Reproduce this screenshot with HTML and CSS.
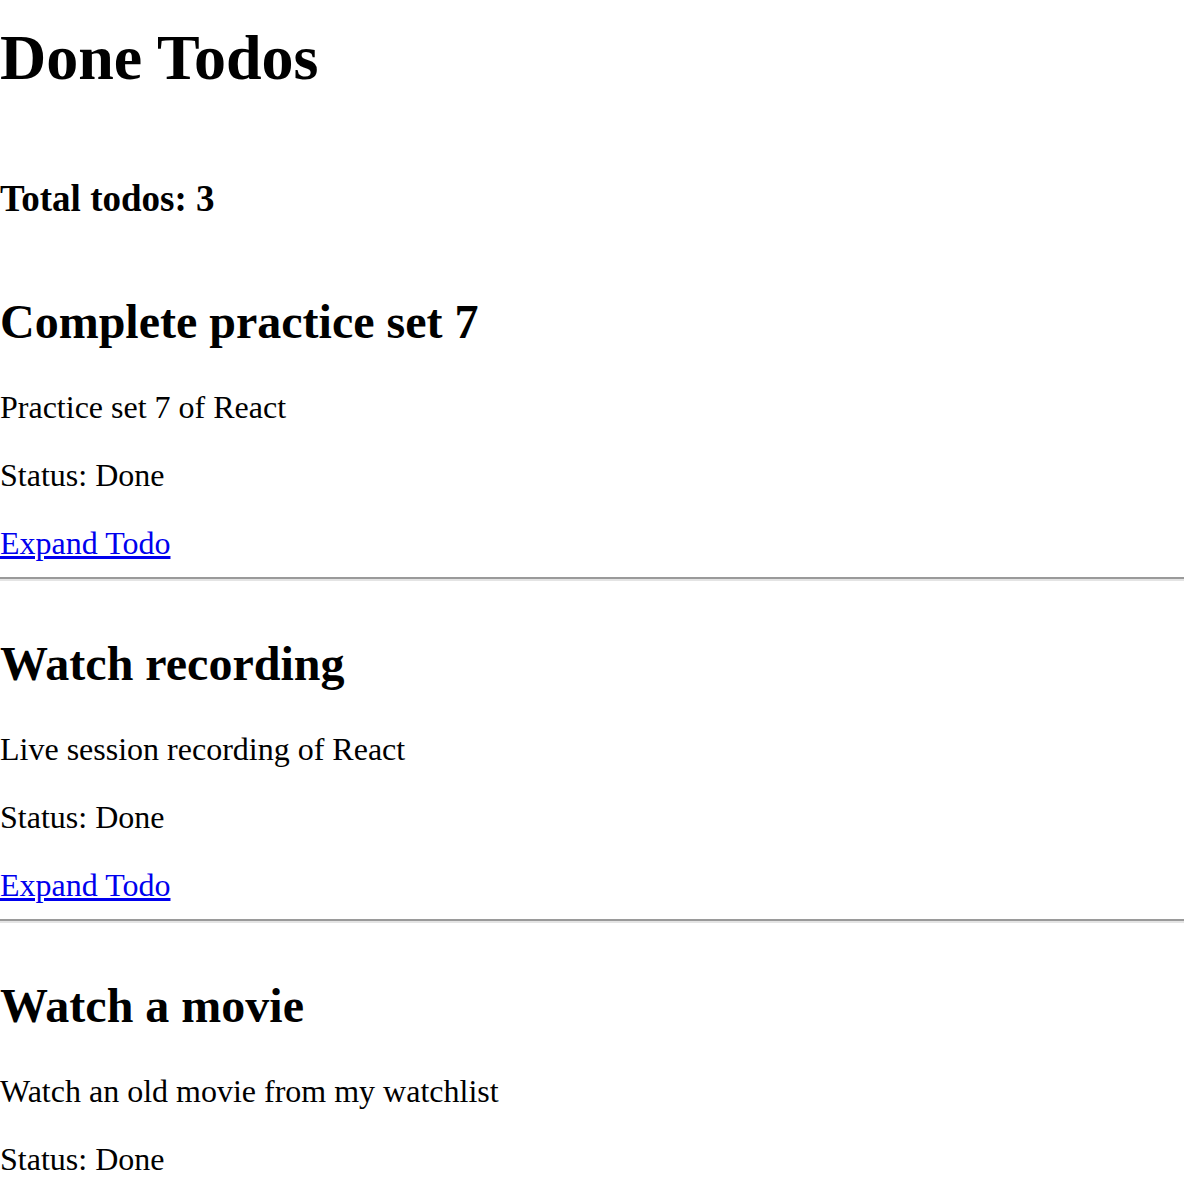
FILE: index.html
```html
<!DOCTYPE html>
<html lang="en">
<head>
<meta charset="utf-8">
<title>Done Todos</title>
<link rel="stylesheet" href="styles.css">
</head>
<body>
<h1 class="page-title">Done Todos</h1>
<h3 class="total">Total todos: 3</h3>
<div class="todo-list">
  <div class="todo">
    <h2 class="todo-title">Complete practice set 7</h2>
    <p class="todo-text">Practice set 7 of React</p>
    <p class="todo-text">Status: Done</p>
    <a class="todo-link" href="#">Expand Todo</a>
    <hr class="todo-rule">
  </div>
  <div class="todo">
    <h2 class="todo-title">Watch recording</h2>
    <p class="todo-text">Live session recording of React</p>
    <p class="todo-text">Status: Done</p>
    <a class="todo-link" href="#">Expand Todo</a>
    <hr class="todo-rule">
  </div>
  <div class="todo">
    <h2 class="todo-title">Watch a movie</h2>
    <p class="todo-text">Watch an old movie from my watchlist</p>
    <p class="todo-text">Status: Done</p>
    <a class="todo-link" href="#">Expand Todo</a>
    <hr class="todo-rule">
  </div>
</div>
</body>
</html>
```
FILE: styles.css
```css
html {
  background: #ffffff;
}

body {
  margin: 0;
  padding: 0 16px 0 0;
  font-family: "Liberation Serif", "Times New Roman", serif;
  font-size: 32px;
  line-height: 36px;
  color: #000000;
}

.page-title {
  font-size: 64px;
  font-weight: bold;
  margin: 21px 0 0;
  line-height: normal;
}

.total {
  font-size: 37px;
  font-weight: bold;
  margin: 82px 0 74px;
  line-height: normal;
}

.todo-title {
  font-size: 48px;
  font-weight: bold;
  margin: 55px 0 40px;
  line-height: normal;
}

.todo-text {
  margin: 32px 0;
  line-height: 36px;
}

.todo-link {
  color: #0000ee;
  text-decoration: underline;
}

.todo-rule {
  margin: 16px 0 0;
  border: none;
  border-top: 2px solid #9a9a9a;
  border-bottom: 2px solid #e4e4e4;
  height: 0;
}
```
